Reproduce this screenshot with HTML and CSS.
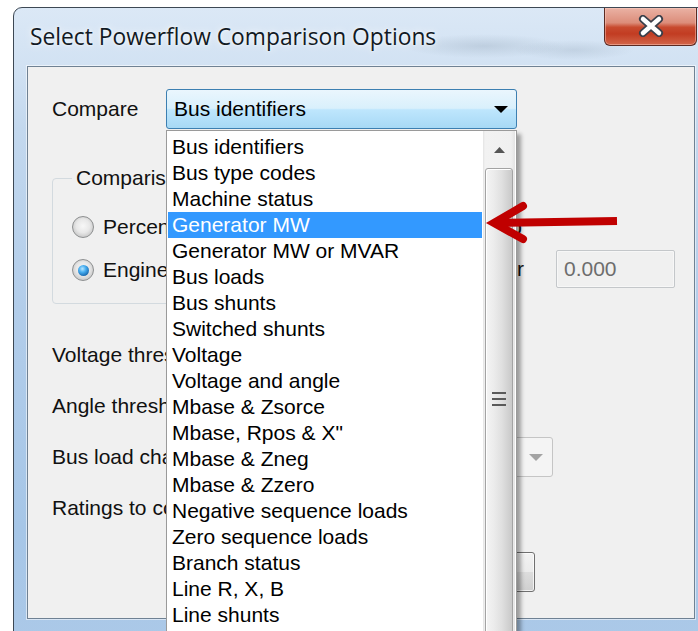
FILE: index.html
```html
<!DOCTYPE html>
<html>
<head>
<meta charset="utf-8">
<title>Select Powerflow Comparison Options</title>
<link rel="stylesheet" href="styles.css">
</head>
<body>
<div class="window">
  <div class="titlebar">
    <span class="title">Select Powerflow Comparison Options</span>
    <div class="close" aria-label="Close">
      <svg width="26" height="22" viewBox="0 0 26 22">
        <path d="M5 4 L21 18 M21 4 L5 18" stroke="#3a3f4a" stroke-width="8" stroke-linecap="round"/>
        <path d="M5 4 L21 18 M21 4 L5 18" stroke="#ffffff" stroke-width="4.5" stroke-linecap="round"/>
      </svg>
    </div>
  </div>

  <div class="client">
    <div class="compare-row">
      <span class="label compare-label">Compare</span>
      <div class="combo open">
        <span class="combo-text">Bus identifiers</span>
        <svg class="combo-arrow" width="14" height="7" viewBox="0 0 14 7"><path d="M0 0 H14 L7 7 Z" fill="#000"/></svg>

        <div class="droplist">
          <ul class="items">
            <li>Bus identifiers</li>
            <li>Bus type codes</li>
            <li>Machine status</li>
            <li class="selected">Generator MW</li>
            <li>Generator MW or MVAR</li>
            <li>Bus loads</li>
            <li>Bus shunts</li>
            <li>Switched shunts</li>
            <li>Voltage</li>
            <li>Voltage and angle</li>
            <li>Mbase &amp; Zsorce</li>
            <li>Mbase, Rpos &amp; X"</li>
            <li>Mbase &amp; Zneg</li>
            <li>Mbase &amp; Zzero</li>
            <li>Negative sequence loads</li>
            <li>Zero sequence loads</li>
            <li>Branch status</li>
            <li>Line R, X, B</li>
            <li>Line shunts</li>
            <li>Line ratings</li>
          </ul>
          <div class="scrollbar">
            <div class="scroll-up">
              <svg width="11" height="6" viewBox="0 0 11 6"><path d="M0 6 L5.5 0 L11 6 Z" fill="#555"/></svg>
            </div>
            <div class="thumb">
              <div class="grip"><i></i><i></i><i></i></div>
            </div>
          </div>
        </div>
      </div>
    </div>

    <div class="middle">
      <fieldset class="group">
        <legend>Comparison type</legend>
        <div class="radio"><span class="dot"></span>Percentage change</div>
        <div class="radio"><span class="dot checked"></span>Engineering units</div>
      </fieldset>
      <div class="side">
        <div class="side-row note"><span class="side-text">Difference threshold setup</span></div>
        <div class="side-row"><span class="side-text">Threshold multiplier</span><div class="field disabled">0.000</div></div>
      </div>
    </div>

    <div class="form">
      <span class="label">Voltage threshold</span>
      <div class="field small">0.0</div>
      <span class="label">Angle threshold</span>
      <div class="field small">0.0</div>
      <span class="label">Bus load change</span>
      <div class="select disabled bus-select">
        <span>All loads</span>
        <svg width="14" height="7" viewBox="0 0 14 7"><path d="M0 0 H14 L7 7 Z" fill="#a3a3a3"/></svg>
      </div>
      <span class="label">Ratings to compare</span>
      <div class="select small">
        <span>Rate A</span>
        <svg width="14" height="7" viewBox="0 0 14 7"><path d="M0 0 H14 L7 7 Z" fill="#000"/></svg>
      </div>
    </div>

    <div class="buttons">
      <div class="btn">OK</div>
      <div class="btn">Cancel</div>
    </div>
  </div>
</div>

<svg class="pointer" width="140" height="56" viewBox="0 0 140 56">
  <path d="M12 28 L132 26" stroke="#c00000" stroke-width="8" fill="none"/>
  <path d="M38 11 L9 28 L38 44" stroke="#c00000" stroke-width="8" fill="none" stroke-linecap="round" stroke-linejoin="miter"/>
</svg>
</body>
</html>
```

FILE: styles.css
```css
html, body {
  margin: 0;
  padding: 0;
}

body {
  width: 698px;
  height: 631px;
  overflow: hidden;
  position: relative;
  background: #ffffff;
  font-family: "Liberation Sans", Arial, sans-serif;
  font-size: 21px;
  color: #111;
}

/* Aero glass window frame */
.window {
  margin: 7px 0 0 13px;
  width: 700px;
  height: 650px;
  box-sizing: border-box;
  border: 1px solid #3d4854;
  border-radius: 9px 9px 0 0;
  background:
    radial-gradient(ellipse 80px 12px at 470px 38px, rgba(110, 130, 150, 0.22), transparent),
    radial-gradient(ellipse 60px 10px at 560px 42px, rgba(110, 130, 150, 0.18), transparent),
    linear-gradient(180deg, #dbe8f6 0, #d2e2f3 56px, #c3d8ee 120px, #b2cdea 300px, #a6c6e7 520px, #acc9e8 650px);
  display: flex;
  flex-direction: column;
}

.titlebar {
  height: 58px;
  display: flex;
  align-items: flex-start;
  flex-shrink: 0;
}

.title {
  margin: 17px 0 0 16px;
  font-family: "Open Sans", "Noto Sans", sans-serif;
  font-size: 22.8px;
  line-height: 24px;
  color: #121a24;
  text-shadow: 0 0 8px rgba(255, 255, 255, 0.9), 0 0 3px rgba(255, 255, 255, 0.9);
  white-space: nowrap;
}

.close {
  margin-left: auto;
  margin-right: 15px;
  width: 93px;
  height: 38px;
  box-sizing: border-box;
  border: 1px solid #5b2a22;
  border-top: none;
  border-radius: 0 0 6px 6px;
  background: linear-gradient(180deg, #eab2a4 0%, #dc8d7a 40%, #c84a2f 52%, #c23c22 70%, #d2664a 100%);
  box-shadow: inset 0 0 0 1px rgba(255, 210, 200, 0.45);
  display: flex;
  align-items: center;
  justify-content: center;
}

.close svg {
  margin-top: -1px;
}

/* Dialog client area */
.client {
  margin-left: 13px;
  width: 668px;
  height: 553px;
  box-sizing: border-box;
  background: #f0f0f0;
  border: 1px solid #6f8193;
  box-shadow: 0 0 0 1px rgba(255, 255, 255, 0.55);
  flex-shrink: 0;
}

.label {
  white-space: nowrap;
  color: #111;
}

.compare-row {
  margin-top: 22px;
  padding-left: 24px;
  display: flex;
  align-items: center;
}

.compare-label {
  width: 114px;
}

.combo {
  position: relative;
  width: 351px;
  height: 40px;
  box-sizing: border-box;
  border: 1px solid #3c7fb1;
  border-radius: 3px;
  display: flex;
  align-items: center;
  padding: 0 8px 0 7px;
}

.combo.open {
  background: linear-gradient(180deg, #eaf6fd 0%, #d9f0fc 48%, #bee6fd 52%, #a7d9f5 100%);
}

.combo-text {
  flex: 1;
  color: #000;
}

/* Drop-down list that hangs below the combo */
.droplist {
  position: absolute;
  z-index: 5;
  left: -1px;
  top: 40px;
  width: 351px;
  height: 520px;
  box-sizing: border-box;
  border: 1px solid #9a9a9a;
  background: #ffffff;
  box-shadow: 4px 4px 4px rgba(0, 0, 0, 0.35);
  display: flex;
  overflow: hidden;
}

.items {
  list-style: none;
  margin: 0;
  padding: 3px 0 0 0;
  width: 316px;
}

.items li {
  height: 26px;
  line-height: 26px;
  margin: 0 1px;
  padding-left: 4px;
  color: #000;
  white-space: nowrap;
}

.items li.selected {
  background: #3399ff;
  color: #ffffff;
}

.scrollbar {
  width: 32px;
  background: linear-gradient(90deg, #e3e3e3 0, #f2f2f2 2px, #f0f0f0 28px, #e4e4e4 32px);
  display: flex;
  flex-direction: column;
  align-items: center;
}

.scroll-up {
  height: 37px;
  display: flex;
  align-items: center;
  justify-content: center;
}

.thumb {
  width: 28px;
  height: 466px;
  box-sizing: border-box;
  border: 1px solid #a3a3a3;
  border-radius: 3px;
  background: linear-gradient(90deg, #f4f4f4 0%, #ececec 30%, #e0e0e0 60%, #c9c9c9 100%);
  box-shadow: inset 1px 1px 0 #ffffff;
  display: flex;
  justify-content: center;
  padding-top: 223px;
}

.grip {
  width: 14px;
  display: flex;
  flex-direction: column;
  gap: 4px;
}

.grip i {
  display: block;
  height: 2px;
  background: #5a5a5a;
}

/* Comparison type group and threshold field */
.middle {
  margin-top: 37px;
  padding-left: 24px;
  display: flex;
}

.group {
  margin: 0;
  width: 448px;
  box-sizing: border-box;
  border: 1px solid #d3dadf;
  border-radius: 4px;
  padding: 24px 0 20px 19px;
  display: flex;
  flex-direction: column;
  gap: 17px;
}

.group legend {
  padding: 0 4px;
  line-height: 24px;
  color: #111;
}

.radio {
  height: 26px;
  display: flex;
  align-items: center;
  gap: 9px;
  white-space: nowrap;
}

.dot {
  width: 22px;
  height: 22px;
  box-sizing: border-box;
  border-radius: 50%;
  border: 1px solid #8d8f90;
  background: radial-gradient(circle at 50% 45%, #f7f7f7 0%, #e8e8e8 45%, #cfcfcf 70%, #f4f4f4 100%);
  display: flex;
  align-items: center;
  justify-content: center;
}

.dot.checked::after {
  content: "";
  width: 11px;
  height: 11px;
  border-radius: 50%;
  background: radial-gradient(circle at 40% 35%, #b9e6ff 0%, #47aef0 35%, #1f72b8 70%, #14507f 100%);
}

.side {
  width: 175px;
  display: flex;
  flex-direction: column;
  padding-top: 42px;
  gap: 4px;
}

.side-row {
  height: 38px;
  display: flex;
  align-items: center;
  justify-content: flex-end;
  gap: 32px;
}

.side-row.note {
  padding-right: 153px;
}

.side-text {
  white-space: nowrap;
  color: #111;
}

.field {
  width: 119px;
  height: 38px;
  box-sizing: border-box;
  border: 1px solid #c2c6c9;
  border-radius: 2px;
  background: #ffffff;
  display: flex;
  align-items: center;
  padding-left: 7px;
  flex-shrink: 0;
}

.field.disabled {
  background: #f0f0f0;
  border-color: #c4c7ca;
  color: #6d6d6d;
  box-shadow: inset 0 0 0 1px #f7f7f7;
}

.field.small {
  width: 150px;
}

/* Threshold rows */
.form {
  margin-top: 31px;
  padding-left: 24px;
  display: grid;
  grid-template-columns: 262px auto;
  row-gap: 11px;
  align-items: center;
  justify-items: start;
}

.form > * {
  height: 40px;
  display: flex;
  align-items: center;
}

.select {
  width: 150px;
  box-sizing: border-box;
  border: 1px solid #8e8f8f;
  border-radius: 3px;
  background: linear-gradient(180deg, #f2f2f2 0%, #ebebeb 50%, #dddddd 50%, #cfcfcf 100%);
  justify-content: space-between;
  padding: 0 9px 0 7px;
}

.select.disabled {
  background: #f4f4f4;
  border-color: #c5c5c5;
  color: #8a8a8a;
}

.bus-select {
  width: 239px;
}

.buttons {
  margin-top: 24px;
  padding-right: 159px;
  display: flex;
  justify-content: flex-end;
  gap: 10px;
}

.btn {
  width: 112px;
  height: 40px;
  box-sizing: border-box;
  border: 1px solid #707070;
  border-radius: 3px;
  background: linear-gradient(180deg, #f2f2f2 0%, #ebebeb 50%, #dddddd 50%, #cfcfcf 100%);
  box-shadow: inset 0 0 0 1px rgba(255, 255, 255, 0.7);
  display: flex;
  align-items: center;
  justify-content: center;
}

/* Red annotation arrow drawn over the dialog */
.pointer {
  position: absolute;
  left: 485px;
  top: 195px;
  z-index: 10;
}
```
